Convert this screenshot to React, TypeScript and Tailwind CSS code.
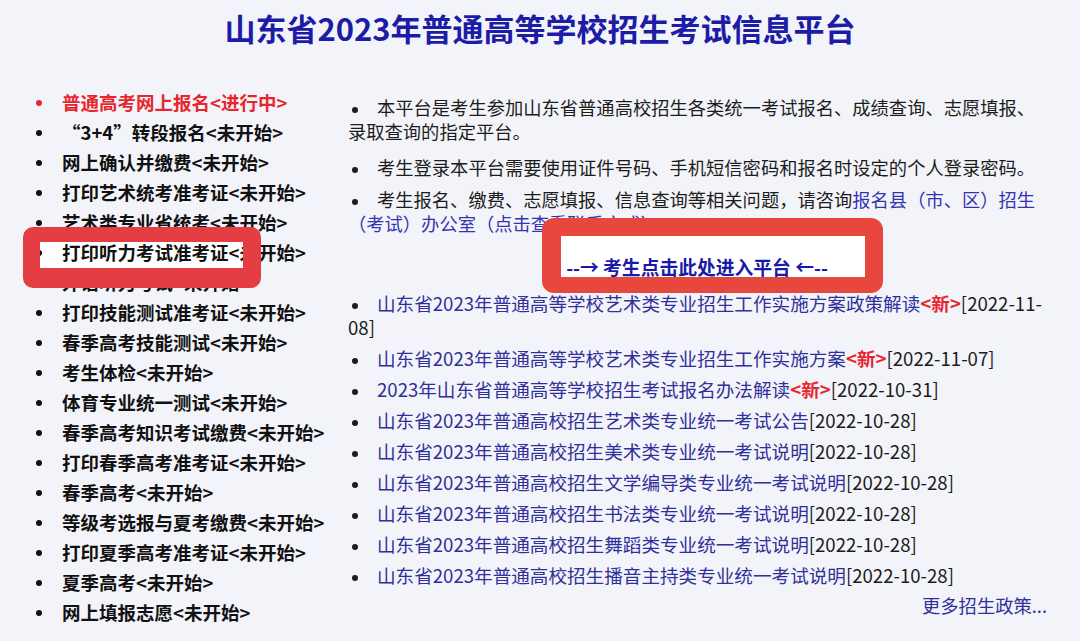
import React from 'react';

const steps = [
  '普通高考网上报名<进行中>',
  '“3+4”转段报名<未开始>',
  '网上确认并缴费<未开始>',
  '打印艺术统考准考证<未开始>',
  '艺术类专业省统考<未开始>',
  '打印听力考试准考证<未开始>',
  '外语听力考试<未开始>',
  '打印技能测试准考证<未开始>',
  '春季高考技能测试<未开始>',
  '考生体检<未开始>',
  '体育专业统一测试<未开始>',
  '春季高考知识考试缴费<未开始>',
  '打印春季高考准考证<未开始>',
  '春季高考<未开始>',
  '等级考选报与夏考缴费<未开始>',
  '打印夏季高考准考证<未开始>',
  '夏季高考<未开始>',
  '网上填报志愿<未开始>',
];

type News = { title: string; isNew?: boolean; date: React.ReactNode };

const news: News[] = [
  {
    title: '山东省2023年普通高等学校艺术类专业招生工作实施方案政策解读',
    isNew: true,
    date: (
      <>
        [2022-11-
        <br />
        08]
      </>
    ),
  },
  { title: '山东省2023年普通高等学校艺术类专业招生工作实施方案', isNew: true, date: '[2022-11-07]' },
  { title: '2023年山东省普通高等学校招生考试报名办法解读', isNew: true, date: '[2022-10-31]' },
  { title: '山东省2023年普通高校招生艺术类专业统一考试公告', date: '[2022-10-28]' },
  { title: '山东省2023年普通高校招生美术类专业统一考试说明', date: '[2022-10-28]' },
  { title: '山东省2023年普通高校招生文学编导类专业统一考试说明', date: '[2022-10-28]' },
  { title: '山东省2023年普通高校招生书法类专业统一考试说明', date: '[2022-10-28]' },
  { title: '山东省2023年普通高校招生舞蹈类专业统一考试说明', date: '[2022-10-28]' },
  { title: '山东省2023年普通高校招生播音主持类专业统一考试说明', date: '[2022-10-28]' },
];

function Dot() {
  return <span className="ml-[4px] mr-[19px] inline-block h-[6px] w-[6px] rounded-full bg-[#1c1c1c] align-middle" />;
}

export default function App() {
  return (
    <div className="relative isolate min-h-[641px] w-[1080px] overflow-hidden bg-[#f3f4f9] font-['Noto_Sans_CJK_SC',sans-serif] text-[#1c1c1c]">
      <h1 className="flex h-[60px] items-center justify-center pb-[4px] text-[31px] font-bold text-[#1c1ca6]">
        山东省2023年普通高等学校招生考试信息平台
      </h1>

      <div className="flex">
        {/* left: schedule */}
        <ul className="w-[348px] pt-[28px]">
          {steps.map((s, i) => (
            <li key={s} className="flex h-[30px] items-center pl-[36px]">
              <span className={`mr-[20px] h-[6px] w-[6px] rounded-full ${i === 0 ? 'bg-[#e8262e]' : 'bg-[#111]'}`} />
              <span className={`text-[18.5px] font-bold ${i === 0 ? 'text-[#e8262e]' : 'text-[#111]'}`}>{s}</span>
            </li>
          ))}
        </ul>

        {/* right: notes + news */}
        <div className="w-[712px] pt-[35px] text-[18.3px] leading-[24px]">
          <p>
            <Dot />
            本平台是考生参加山东省普通高校招生各类统一考试报名、成绩查询、志愿填报、
            <br />
            录取查询的指定平台。
          </p>
          <p className="mt-[12px]">
            <Dot />
            考生登录本平台需要使用证件号码、手机短信密码和报名时设定的个人登录密码。
          </p>
          <p className="mt-[8px]">
            <Dot />
            考生报名、缴费、志愿填报、信息查询等相关问题，请咨询
            <a className="text-[#3434b0]">报名县（市、区）招生</a>
            <br />
            <a className="text-[#3434b0]">（考试）办公室（点击查看联系方式）</a>
          </p>

          <div className="mt-[20px] pr-[14px] text-center text-[18.8px] font-bold text-[#1a1aa8]">--→ 考生点击此处进入平台 ←--</div>

          <ul className="mt-[12px] text-[18.6px]">
            {news.map((n, i) => (
              <li key={i} className={i === 0 ? '' : 'mt-[7px]'}>
                <Dot />
                <a className="text-[#30309a]">{n.title}</a>
                {n.isNew && <span className="font-bold text-[#e8262e]">&lt;新&gt;</span>}
                <span>{n.date}</span>
              </li>
            ))}
          </ul>

          <div className="mt-[6px] pr-[13px] text-right text-[#30309a]">更多招生政策...</div>
        </div>
      </div>

      {/* annotation highlights */}
      <div className="absolute left-[40px] top-[242px] -z-10 h-[26px] w-[203px] bg-white" />
      <div className="pointer-events-none absolute left-[23px] top-[227px] z-10 h-[61px] w-[238px] rounded-[10px] border-b-[20px] border-l-[17px] border-r-[18px] border-t-[15px] border-[#e43d44]" />
      <div className="absolute left-[561px] top-[236px] -z-10 h-[41px] w-[304px] bg-white" />
      <div className="pointer-events-none absolute left-[542px] top-[218px] z-10 h-[75px] w-[341px] rounded-[12px] border-b-[16px] border-l-[19px] border-r-[18px] border-t-[18px] border-[#e8473d]" />
    </div>
  );
}
